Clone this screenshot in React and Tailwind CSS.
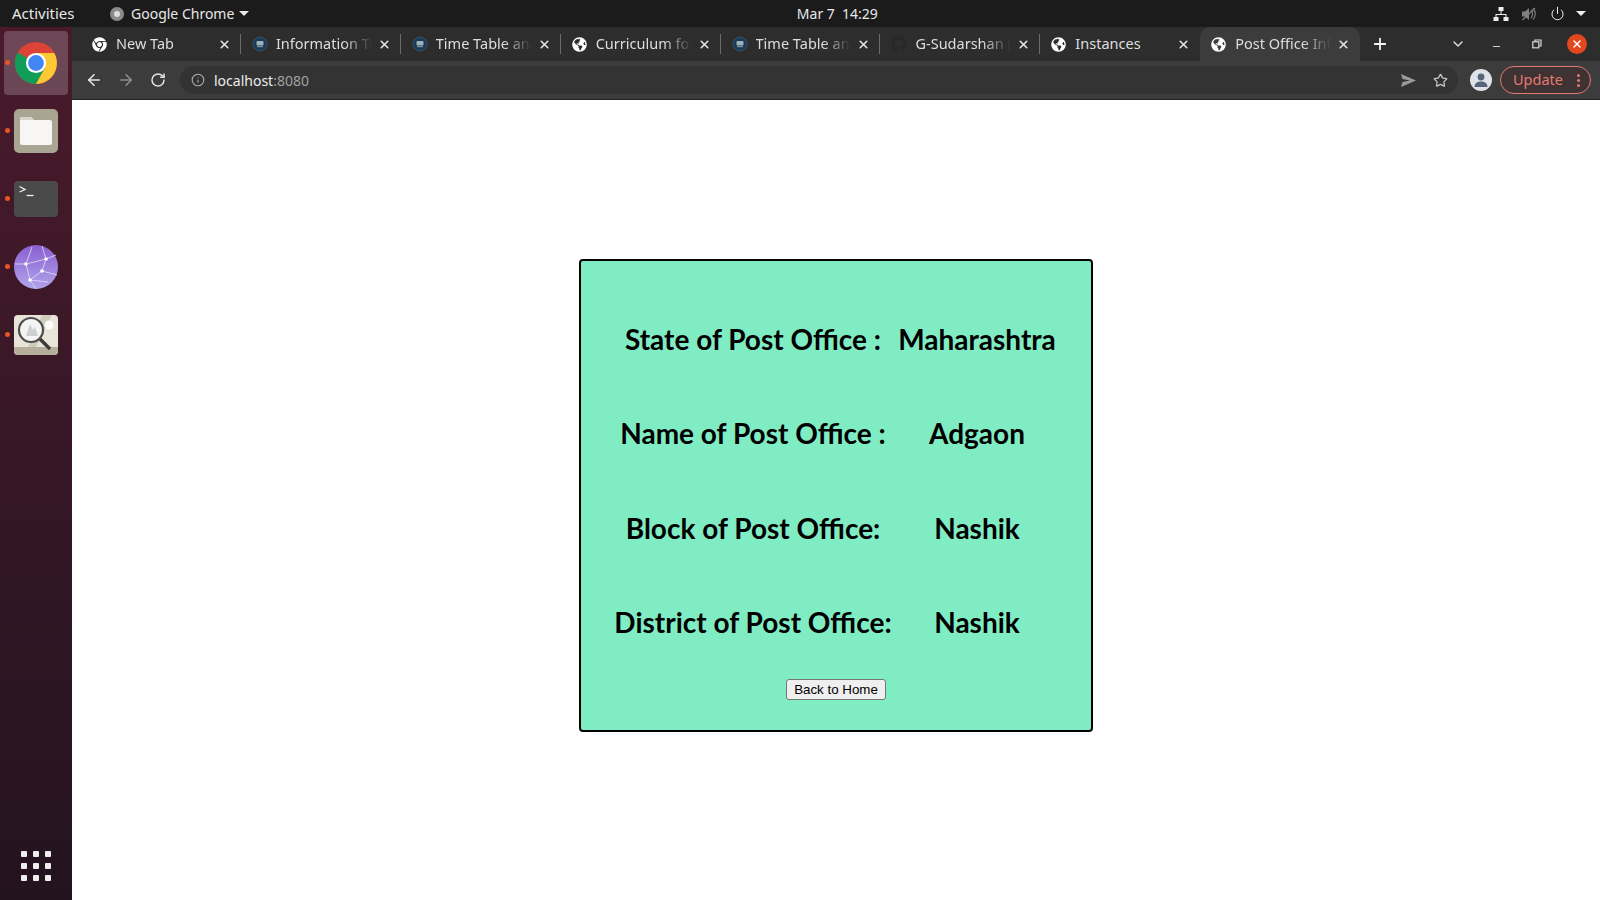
import React from "react";
import { ArrowLeft, ArrowRight, RotateCw, Info, Star, Plus, X, ChevronDown, Minus, Power } from "lucide-react";
import { FaChrome, FaGlobeAmericas, FaGithub } from "react-icons/fa";

const ChromeLogo = ({ size = 44 }) => (
  <svg width={size} height={size} viewBox="0 0 48 48">
    <circle cx="24" cy="24" r="23" fill="#db4437" />
    <path d="M24 24 L4.1 12.5 A23 23 0 0 0 24 47 L34 29 Z" fill="#0f9d58" />
    <path d="M24 13 L44 13 A23 23 0 0 1 24 47 L34 29 Z" fill="#fcc934" />
    <circle cx="24" cy="24" r="11" fill="#fff" />
    <circle cx="24" cy="24" r="8.6" fill="#4285f4" />
  </svg>
);

const TimeIcon = () => (
  <svg width="16" height="16" viewBox="0 0 16 16">
    <circle cx="8" cy="8" r="7" fill="#1d3a52" stroke="#2c5878" strokeWidth="1" />
    <rect x="4.5" y="5" width="7" height="4.500" rx="1" fill="#9fb0bd" />
    <rect x="5" y="10" width="6" height="1.2" fill="#7f93a3" />
  </svg>
);

const tabs = [
  { title: "New Tab", icon: <FaChrome size={15} className="text-white" /> },
  { title: "Information Technology", icon: <TimeIcon /> },
  { title: "Time Table and Syllabus", icon: <TimeIcon /> },
  { title: "Curriculum for Students", icon: <FaGlobeAmericas size={15} className="text-white" /> },
  { title: "Time Table and Syllabus", icon: <TimeIcon /> },
  { title: "G-Sudarshan (Sudarshan)", icon: <FaGithub size={16} className="text-[#24292e]" /> },
  { title: "Instances", icon: <FaGlobeAmericas size={15} className="text-white" />, plain: true },
  { title: "Post Office Information", icon: <FaGlobeAmericas size={15} className="text-white" />, active: true },
];

const rows = [
  ["State of Post Office :", "Maharashtra"],
  ["Name of Post Office :", "Adgaon"],
  ["Block of Post Office:", "Nashik"],
  ["District of Post Office:", "Nashik"],
];

function Tab({ tab, last, hideSep }) {
  return (
    <div
      className={`relative flex h-full w-[159.9px] shrink-0 items-center pl-[11px] pr-[10px] ${
        tab.active ? "rounded-t-[10px] bg-[#3c3c3c]" : ""
      }`}
    >
      <span className="flex w-[24px] shrink-0 items-center">{tab.icon}</span>
      <span
        className={`min-w-0 flex-1 overflow-hidden whitespace-nowrap text-[14.5px] text-[#dedede] ${
          tab.plain ? "" : "[mask-image:linear-gradient(to_right,#000_70%,transparent_100%)]"
        }`}
      >
        {tab.title}
      </span>
      <X size={13} strokeWidth={3} className="ml-[6px] shrink-0 text-[#e4e4e4]" />
      {!last && !hideSep && <span className="absolute right-0 top-[7px] h-[20px] w-px bg-[#6a6a6a]" />}
    </div>
  );
}

function DockItem({ children, active }) {
  return (
    <div className="relative flex h-[68px] items-center justify-center">
      {active && <span className="absolute inset-x-[4px] inset-y-[2px] rounded-[4px] bg-white/20" />}
      <span className="absolute left-[5px] top-[31px] h-[5px] w-[5px] rounded-full bg-[#e95420]" />
      <span className="relative">{children}</span>
    </div>
  );
}

export default function App() {
  return (
    <div className="flex h-[900px] w-[1600px] flex-col overflow-hidden bg-white font-['Noto_Sans',sans-serif]">
      <header className="flex h-[27px] shrink-0 items-center bg-[#1b1b1b] text-[14px] text-[#e8e8e8]">
        <span className="ml-[12px] w-[97px] text-[15px]">Activities</span>
        <svg width="16" height="16" viewBox="0 0 16 16" className="mr-[6px]">
          <circle cx="8" cy="8" r="7" fill="#8a8a8a" />
          <circle cx="8" cy="8" r="3" fill="#dcdcdc" />
        </svg>
        <span>Google Chrome</span>
        <span className="ml-[5px] h-0 w-0 border-x-[5px] border-t-[5px] border-x-transparent border-t-[#e8e8e8]" />
        <span className="ml-[546px] w-[84px] text-center whitespace-pre">Mar 7  14:29</span>
        <div className="ml-auto flex items-center">
          <svg width="16" height="16" viewBox="0 0 16 16" className="mr-[12px]" fill="#eee">
            <rect x="5.5" y="1" width="5" height="4" />
            <rect x="0.5" y="11" width="5" height="4" />
            <rect x="10.5" y="11" width="5" height="4" />
            <path d="M7.5 5h1v3h5v3h-1V9h-9v2h-1V8h5z" />
          </svg>
          <svg width="16" height="16" viewBox="0 0 16 16" className="mr-[13px]" fill="#7f7f7f">
            <path d="M1 5.5h3L8 2v12l-4-3.5H1z" />
            <path d="M10 4c2 2 2 6 0 8M12 2.5c3 3 3 8 0 11" fill="none" stroke="#7f7f7f" strokeWidth="1.2" />
            <path d="M1.5 14 14 2" stroke="#7f7f7f" strokeWidth="1.2" />
          </svg>
          <Power size={15} strokeWidth={1.6} className="mr-[11px] text-[#eee]" />
          <span className="mr-[14px] h-0 w-0 border-x-[5px] border-t-[5px] border-x-transparent border-t-[#eee]" />
        </div>
      </header>

      <div className="flex min-h-0 flex-1">
        <aside className="flex w-[72px] shrink-0 flex-col bg-gradient-to-b from-[#4a1a2c] to-[#23131f] pt-[2px]">
          <DockItem active>
            <ChromeLogo />
          </DockItem>
          <DockItem>
            <div className="flex h-[44px] w-[44px] items-center justify-center rounded-[5px] bg-[#aaa492]">
              <svg width="34" height="30" viewBox="0 0 34 30">
                <path d="M1 3a2 2 0 0 1 2-2h9l3 3h16a2 2 0 0 1 2 2v21a2 2 0 0 1-2 2H3a2 2 0 0 1-2-2z" fill="#f7f6f4" />
                <path d="M1 4a3 3 0 0 1 3-3h8l3 3z" fill="#d9d5ca" />
              </svg>
            </div>
          </DockItem>
          <DockItem>
            <div className="h-[36px] w-[44px] rounded-[4px] bg-[#4a4a4a] pl-[5px] pt-[4px]">
              <svg width="18" height="13" viewBox="0 0 18 13" fill="none" stroke="#f2f2f2" strokeWidth="1.3">
                <path d="M0.5 1.5 6 4.5 0.5 7" />
                <path d="M7.5 10.5h7" />
              </svg>
            </div>
          </DockItem>
          <DockItem>
            <svg width="44" height="44" viewBox="0 0 44 44">
              <defs>
                <linearGradient id="gl" x1="0" y1="0" x2="0" y2="1">
                  <stop offset="0" stopColor="#8a5fd0" />
                  <stop offset="1" stopColor="#b0a4ea" />
                </linearGradient>
              </defs>
              <circle cx="22" cy="22" r="22" fill="url(#gl)" />
              <g stroke="#e6defa" strokeWidth="0.8" fill="none">
                <path d="M1 19 12 19 32 14 42 10M12 19 16 35 28 26 32 14M28 26 43 30M16 35 34 37M16 35 22 44M12 19 18 2M32 14 28 1" />
              </g>
              <g fill="#fff">
                <circle cx="12" cy="19" r="1.8" />
                <circle cx="32" cy="14" r="1.8" />
                <circle cx="28" cy="26" r="1.8" />
                <circle cx="16" cy="35" r="1.8" />
              </g>
            </svg>
          </DockItem>
          <DockItem>
            <svg width="44" height="40" viewBox="0 0 44 40">
              <rect width="44" height="40" rx="4" fill="#e8e4d8" />
              <path d="M0 32h44v4a4 4 0 0 1-4 4H4a4 4 0 0 1-4-4z" fill="#b5ae9a" />
              <path d="M28 0h10L22 32H14z" fill="#d0ccbd" />
              <circle cx="35" cy="10" r="4.5" fill="#fafafa" />
              <circle cx="17" cy="15" r="12" fill="#f4f4f2" stroke="#4d4d4d" strokeWidth="2.2" />
              <path d="M12 21 16 9l3 6 2-3 3 9z" fill="#cfcfcf" />
              <path d="M26 24 36 34" stroke="#3b3b3b" strokeWidth="3.4" />
            </svg>
          </DockItem>
          <div className="mt-auto grid grid-cols-3 gap-[6px] self-center pb-[19px]">
            {Array.from({ length: 9 }).map((_, i) => (
              <span key={i} className="h-[6px] w-[6px] rounded-[1px] bg-[#eeeeec]" />
            ))}
          </div>
        </aside>

        <div className="flex min-w-0 flex-1 flex-col">
          <div className="flex h-[34px] shrink-0 items-center bg-[#2d2d2d] pl-[9px]">
            {tabs.map((t, i) => (
              <Tab key={i} tab={t} last={i === tabs.length - 1} hideSep={i >= 6} />
            ))}
            <Plus size={18} strokeWidth={2.4} className="ml-[11px] text-[#f2f2f2]" />
            <ChevronDown size={16} strokeWidth={2.2} className="ml-[61px] text-[#dcdcdc]" />
            <Minus size={11} strokeWidth={2} className="ml-[25px] mt-[4px] text-[#dcdcdc]" />
            <svg width="10" height="10" viewBox="0 0 10 10" className="ml-[30px]" fill="none" stroke="#dcdcdc" strokeWidth="1.2">
              <rect x="0.8" y="2.8" width="6" height="6" />
              <path d="M3 2.5V1h6v6H7.2" />
            </svg>
            <span className="ml-[25px] flex h-[20px] w-[20px] items-center justify-center rounded-full bg-[#e2481f]">
              <X size={12} strokeWidth={3} className="text-white" />
            </span>
          </div>

          <div className="flex h-[39px] shrink-0 items-center border-b border-[#222] bg-[#3c3c3c]">
            <ArrowLeft size={18} strokeWidth={2.2} className="ml-[13px] text-[#e6e6e6]" />
            <ArrowRight size={18} strokeWidth={2.2} className="ml-[14px] text-[#8e8e8e]" />
            <RotateCw size={16} strokeWidth={2.2} className="ml-[15px] text-[#e6e6e6]" />
            <div className="ml-[14px] flex h-[28px] w-[1278px] items-center rounded-full bg-[#333333] pl-[11px] pr-[10px]">
              <Info size={14} strokeWidth={1.8} className="text-[#b0b0b0]" />
              <span className="ml-[9px] text-[14px] text-[#ececec]">
                localhost<span className="text-[#a0a0a0]">:8080</span>
              </span>
              <svg width="15" height="13" viewBox="0 0 15 13" fill="#9a9a9a" className="ml-auto">
                <path d="M0 0 15 6.5 0 13l1.5-5L9 6.5 1.5 5z" />
              </svg>
              <Star size={15} strokeWidth={2} className="ml-[17px] text-[#c8c8c8]" />
            </div>
            <span className="ml-[12px] flex h-[22px] w-[22px] items-center justify-center overflow-hidden rounded-full bg-[#dfe3e8]">
              <svg width="16" height="16" viewBox="0 0 16 16" fill="#56657a">
                <circle cx="8" cy="5" r="3.4" />
                <path d="M1.5 15c0-4 3-5.5 6.5-5.5S14.500 11 14.500 15z" />
              </svg>
            </span>
            <div className="ml-[8px] flex h-[28px] w-[91px] items-center rounded-full border border-[#e27a74] bg-[#3f3232] pl-[12px] text-[14.5px] text-[#e27a74]">
              Update
              <span className="ml-auto mr-[10px] flex flex-col gap-[2px]">
                <span className="h-[3px] w-[3px] rounded-full bg-[#e27a74]" />
                <span className="h-[3px] w-[3px] rounded-full bg-[#e27a74]" />
                <span className="h-[3px] w-[3px] rounded-full bg-[#e27a74]" />
              </span>
            </div>
          </div>

          <main className="flex-1 bg-white pt-[159px]">
            <section className="mx-auto h-[473px] w-[514px] rounded-[4px] border-2 border-black bg-[#80ecc4]">
              <div className="pt-[31px]">
                {rows.map(([label, value]) => (
                  <div key={label} className="grid h-[94.3px] grid-cols-[288px_160px] items-center pl-[28px] font-['Lato',sans-serif] text-[28px] font-bold text-black">
                    <span className="whitespace-nowrap text-center">{label}</span>
                    <span className="whitespace-nowrap text-center">{value}</span>
                  </div>
                ))}
              </div>
              <div className="mt-[10px] flex justify-center">
                <button className="h-[21px] rounded-[3px] border border-[#767676] bg-[#efefef] px-[7px] font-['Liberation_Sans',sans-serif] text-[13.33px] leading-none text-black">
                  Back to Home
                </button>
              </div>
            </section>
          </main>
        </div>
      </div>
    </div>
  );
}
